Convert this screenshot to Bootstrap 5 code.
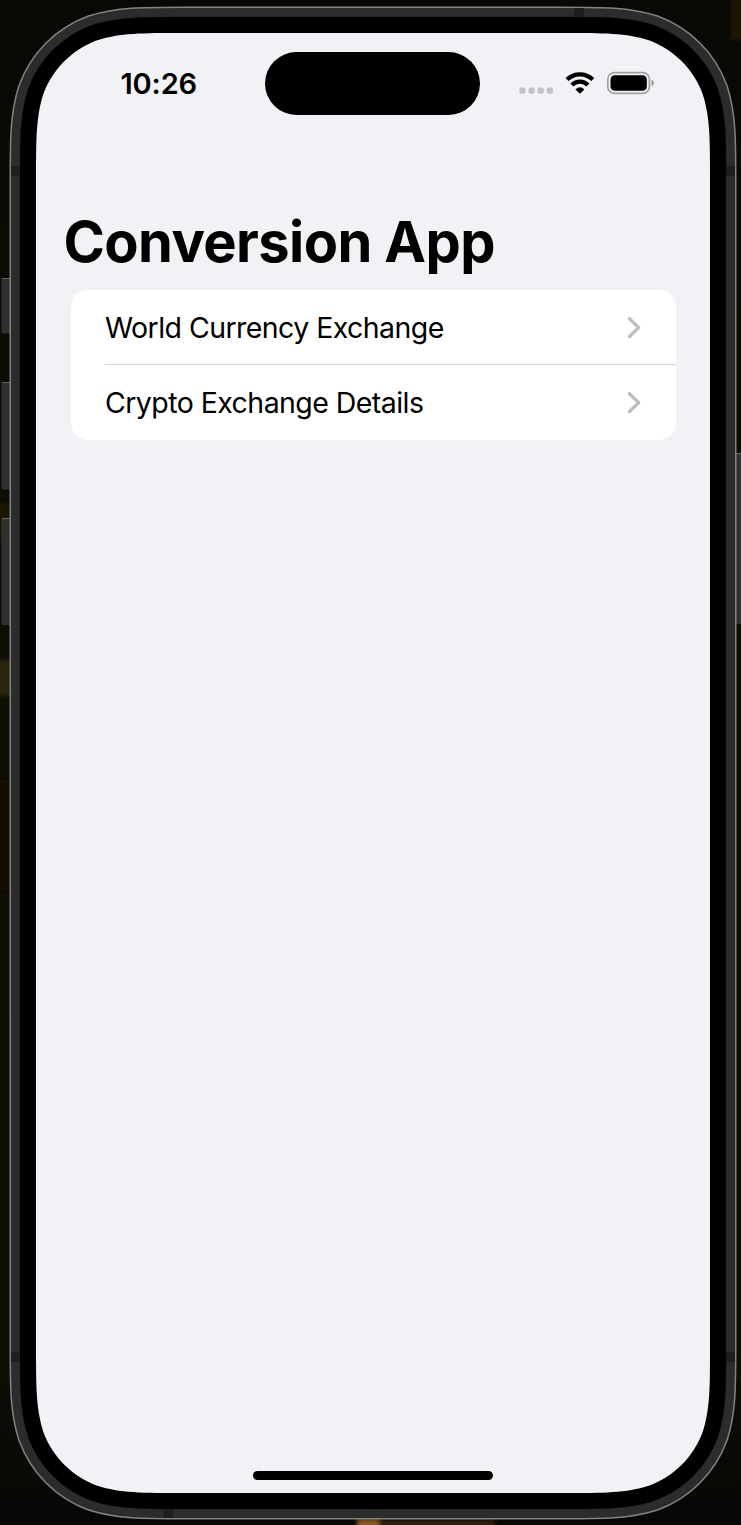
<!DOCTYPE html>
<html lang="en">
<head>
<meta charset="utf-8">
<meta name="viewport" content="width=device-width, initial-scale=1">
<title>Conversion App</title>
<link href="https://cdn.jsdelivr.net/npm/bootstrap@5.3.0/dist/css/bootstrap.min.css" rel="stylesheet">
<style>
body{background:#0a0a05;font-family:Inter,"Liberation Sans",sans-serif;color:#000;height:1525px;overflow:hidden}
.stage{width:741px;height:1525px;padding:33px 31px 32px 36px}
.shell{left:0;top:0;z-index:0}
.screen{z-index:1;width:674px}
.status{height:82px;padding-top:19px}
.clock{width:229.4px;padding-left:84.5px;font-size:29px;font-weight:600;line-height:64px;letter-spacing:-.15px}
.island{width:215px;height:63px;background:#000;border-radius:32px}
.icons{padding-left:38.6px;height:63px}
.app-title{font-size:56px;font-weight:700;line-height:70px;letter-spacing:-.6px;margin:92px 0 0 27.500px}
.options{margin:12.5px 34.5px 0 34.5px;border-radius:17px;overflow:hidden;background:#fff}
.option{height:75.3px;margin-left:34.5px;padding:2px 34.5px 0 0;font-size:28.5px;letter-spacing:-.56px;line-height:36px;color:#000;border:0;border-radius:0}
.option:first-child{border-bottom:1px solid #d9d9dc}
.home{width:240px;height:9px;border-radius:5px;background:#000;margin-bottom:13.5px}
</style>
</head>
<body>
<main class="stage position-relative d-flex">
  <svg class="shell position-absolute" width="741" height="1525" aria-hidden="true">
    <defs>
      <filter id="soft" x="-50%" y="-50%" width="200%" height="200%"><feGaussianBlur stdDeviation="2"/></filter>
      <linearGradient id="wall" x1="0" x2="0" y1="0" y2="1"><stop offset="0" stop-color="#090904"/><stop offset=".5" stop-color="#100e05"/><stop offset=".9" stop-color="#0f0d05"/><stop offset="1" stop-color="#060605"/></linearGradient>
      <path id="edge"/>
    </defs>
    <rect width="741" height="1525" fill="url(#wall)"/>
    <g filter="url(#soft)">
      <rect x="-5" y="660" width="17" height="36" fill="#2c270a"/>
      <rect x="-5" y="503" width="17" height="40" fill="#1a1405"/>
      <rect x="-5" y="780" width="16" height="110" fill="#130d04"/>
      <rect x="731" y="-5" width="14" height="45" fill="#1d1206"/>
      <rect x="357" y="1519" width="138" height="10" fill="#2b1b09"/>
      <rect x="357" y="1519" width="22" height="10" fill="#8a5a22"/>
    </g>
    <g fill="#303030">
      <rect x="1.5" y="278" width="12" height="55.5" rx="1.5"/><rect x="1.5" y="382" width="12" height="107.5" rx="1.5"/><rect x="1.5" y="518" width="12" height="107" rx="1.5"/><rect x="734" y="453" width="9" height="171"/>
    </g>
    <path d="M2 278.5h9M2 382.5h9M2 518.5h9M736 453.5h6" stroke="#62625f"/>
    <use href="#edge" stroke="#82827f" stroke-width="53"/>
    <use href="#edge" stroke="#2c2c2c" stroke-width="50"/>
    <path d="M11 166h10v10H11zM725 166h10v10h-10zM11 1352h10v10H11zM725 1352h10v10h-10zM574 8h10v10h-10zM163.500 1508h10v10h-10z" fill="#1e1e1e"/>
    <use href="#edge" stroke="#202020" stroke-width="33"/>
    <use href="#edge" stroke="#000" stroke-width="32"/>
    <use href="#edge" fill="#f2f1f6"/>
  </svg>
  <section class="screen position-relative flex-shrink-0 d-flex flex-column">
    <header class="status d-flex">
      <div class="clock">10:26</div>
      <div class="island"></div>
      <div class="icons d-flex">
        <svg width="140" height="63" viewBox="519 52 140 63" aria-label="Signal, Wi-Fi and battery">
          <g fill="#c1c1c6"><rect x="519.300" y="87.500" width="6.200" height="6.200" rx="2"/><rect x="528.500" y="87.500" width="6.200" height="6.200" rx="2"/><rect x="537.600" y="87.500" width="6.200" height="6.200" rx="2"/><rect x="546.800" y="87.500" width="6.200" height="6.200" rx="2"/></g>
          <g fill="none" stroke="#000" stroke-width="4.200">
            <path d="M567 79.600A18.300 18.300 0 0 1 592.800 79.600"/>
            <path d="M571.900 84.900A11.300 11.300 0 0 1 587.900 84.900"/>
          </g>
          <path d="M579.900 93.700L575.400 89.500Q579.900 84.800 584.400 89.500Z"/>
          <rect x="607.800" y="72.700" width="41.600" height="20.600" rx="6.600" fill="none" stroke="#a2a2a6" stroke-width="1.700"/>
          <rect x="610.500" y="75.300" width="36.300" height="15.400" rx="4.300"/>
          <path d="M651.500 79.800Q653.900 80.600 653.900 83T651.500 86.200Z" fill="#98989c"/>
        </svg>
      </div>
    </header>
    <h1 class="app-title">Conversion App</h1>
    <nav class="options list-group">
      <a class="option list-group-item d-flex align-items-center justify-content-between bg-transparent" href="#">World Currency Exchange
        <svg width="14" height="22" viewBox="0 0 14 22" fill="none" stroke="#bebec0" stroke-width="3.300" stroke-linecap="round" stroke-linejoin="round"><path d="M2.500 1.700L11.700 10.600L2.500 19.500"/></svg></a>
      <a class="option list-group-item d-flex align-items-center justify-content-between bg-transparent" href="#">Crypto Exchange Details
        <svg width="14" height="22" viewBox="0 0 14 22" fill="none" stroke="#bebec0" stroke-width="3.300" stroke-linecap="round" stroke-linejoin="round"><path d="M2.500 1.700L11.700 10.600L2.500 19.500"/></svg></a>
    </nav>
    <div class="home mt-auto mx-auto"></div>
  </section>
</main>
<script src="https://cdn.jsdelivr.net/npm/bootstrap@5.3.0/dist/js/bootstrap.bundle.min.js"></script>
<script>
// Continuous-curvature corners for the screen edge; the bezel layers are strokes around it
const x = 36, y = 33, w = 674, h = 1460, r = 97;
const corner = [[1.5287,0],[1.0885,0],[.8684,0],[.6315,.0749],[.3728,.1691],[.1691,.3728],[.0749,.6315],[0,.8684],[0,1.0885],[0,1.5287]];
const place = (fx, fy, rev) => {
  const p = corner.map(([a, b]) => [fx ? x + w - a * r : x + a * r, fy ? y + h - b * r : y + b * r]);
  if (rev) p.reverse();
  return p[0].join(' ') + 'C' + p.slice(1).map(q => q.join(' ')).join(' ');
};
document.getElementById('edge').setAttribute('d', 'M' + place(0,0,false) + 'L' + place(0,1,true) + 'L' + place(1,1,false) + 'L' + place(1,0,true) + 'Z');
</script>
</body>
</html>
